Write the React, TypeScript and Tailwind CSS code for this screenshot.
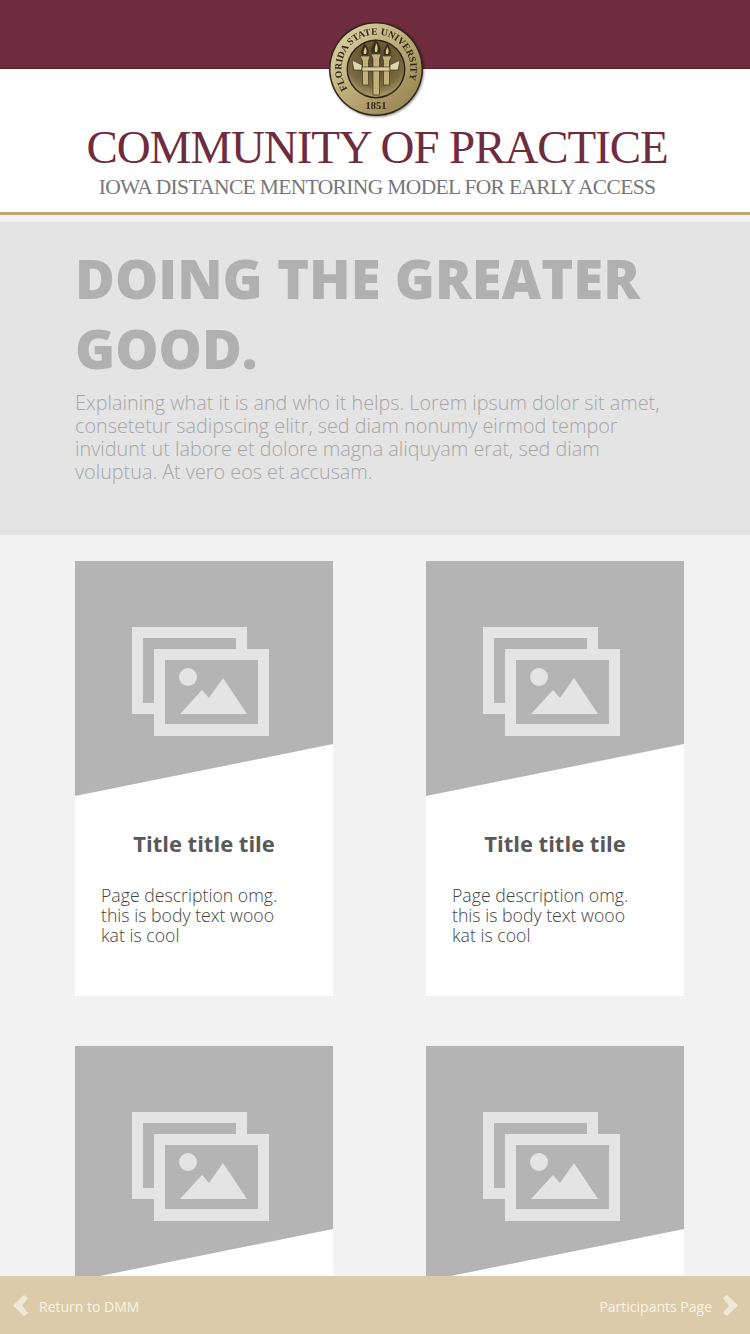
import React from "react";

const cards = [1, 2, 3, 4];

const GalleryIcon = () => (
  <svg width="137" height="109" viewBox="0 0 137 109" fill="#e4e4e4">
    <path d="M0 0H115V22H104V11H11V76H22V87H0Z" />
    <path fillRule="evenodd" d="M22 22H137V109H22ZM33 33V97H126V33Z" />
    <circle cx="56" cy="50" r="9" />
    <path d="M48 87L70 63L77 71L91 51L115 87Z" />
  </svg>
);

const Seal = () => (
  <svg width="96" height="96" viewBox="0 0 96 96" className="drop-shadow-[1px_1px_1px_rgba(0,0,0,0.45)]">
    <defs>
      <linearGradient id="ring" x1="0" y1="0" x2="1" y2="1">
        <stop offset="0" stopColor="#e0d7af" />
        <stop offset="0.5" stopColor="#bcaa76" />
        <stop offset="1" stopColor="#8f7a49" />
      </linearGradient>
      <radialGradient id="middle" cx="0.5" cy="0.3" r="0.85">
        <stop offset="0" stopColor="#55472a" />
        <stop offset="0.6" stopColor="#7b6a3e" />
        <stop offset="1" stopColor="#cbbb8a" />
      </radialGradient>
      <path id="topArc" d="M18.7 66.8A34.5 34.5 0 1 1 53 81" />
    </defs>
    <circle cx="47" cy="47" r="47" fill="#2e2617" />
    <circle cx="47" cy="47" r="45.5" fill="url(#ring)" />
    <circle cx="47" cy="47" r="29.5" fill="#2e2617" />
    <circle cx="47" cy="47" r="28" fill="url(#middle)" />
    <text fontFamily="'Liberation Serif', serif" fontSize="9.7" fontWeight="700" fill="#2e2617">
      <textPath href="#topArc">FLORIDA STATE UNIVERSITY</textPath>
    </text>
    <text x="47" y="87" textAnchor="middle" fontFamily="'Liberation Serif', serif" fontSize="10.5" fontWeight="700" fill="#2e2617">
      1851
    </text>
    <g fill="#3a2f18">
      <path d="M33 33C30 29 34 26 35 21C39 25 41 29 39 33Z" />
      <path d="M43 31C40 26 45 23 46 17C50 22 53 26 51 31Z" />
      <path d="M55 33C53 29 57 26 58 21C61 25 63 29 61 33Z" />
    </g>
    <g fill="#d8cb9c">
      <path d="M35 32C34 29 36 27 36 25C38 27 38 30 37 32Z" />
      <path d="M46 30C45 27 47 24 47 21C49 24 49 27 48 30Z" />
      <path d="M57 32C56 29 58 27 58 25C60 27 60 30 59 32Z" />
    </g>
    <g fill="#c3b07a" stroke="#2e2617" strokeWidth="0.6">
      <path d="M31 34H41L39.5 39V63H33.5V39Z" />
      <path d="M42 32H52L50.5 37V73H44V37Z" />
      <path d="M53 34H63L60.5 39V63H54.5V39Z" />
    </g>
    <path d="M23 38L33 43V48L25 48Z" fill="#e0d6ae" stroke="#2e2617" strokeWidth="0.6" />
    <path d="M33 45H61V49H33Z" fill="#d9cea3" stroke="#2e2617" strokeWidth="0.6" />
    <path d="M71 38L61 43V48L69 48Z" fill="#e0d6ae" stroke="#2e2617" strokeWidth="0.6" />
  </svg>
);

const Chevron = ({ right }: { right?: boolean }) => (
  <svg width="15" height="21" viewBox="0 0 15 21" fill="#f1e9d8" className={right ? "" : "-scale-x-100"}>
    <path d="M0 3L4 0L15 10.5L4 21L0 18L6 10.5Z" />
  </svg>
);

const Card = () => (
  <div className="bg-white h-[435px] flex flex-col">
    <div className="h-[235px] bg-[#b4b4b4] pl-[57px] pt-[66px] [clip-path:polygon(0_0,100%_0,100%_183px,0_100%)]">
      <GalleryIcon />
    </div>
    <h3 className="mt-[32px] text-center text-[22px] leading-[30px] font-bold text-[#595959]">Title title tile</h3>
    <p className="mt-[27px] pl-[26px] pr-[40px] text-[17.7px] leading-[20px] font-light text-[#444444]">
      Page description omg. this is body text wooo kat is cool
    </p>
  </div>
);

export default function App() {
  return (
    <div className="relative h-[1334px] overflow-hidden bg-[#f2f2f2] font-['Open_Sans',sans-serif]">
      {/* Header */}
      <header className="relative h-[215px] bg-white border-b-[3px] border-[#bfa876]">
        <div className="h-[69px] bg-[#6f2c3f] border-b border-[#5d2233]" />
        <div className="absolute left-[329px] top-[22px]">
          <Seal />
        </div>
        <div className="pt-[55px] pl-[4px] text-center font-['Liberation_Serif',serif]">
          <h1 className="text-[47px] leading-[46px] text-[#6f2c3f] tracking-[-1.1px]">COMMUNITY OF PRACTICE</h1>
          <p className="mt-[4px] text-[21.5px] leading-[26px] text-[#77777a] tracking-[-0.65px]">IOWA DISTANCE MENTORING MODEL FOR EARLY ACCESS</p>
        </div>
      </header>

      {/* Hero */}
      <section className="mt-[7px] h-[313px] bg-[#e4e4e4] pl-[75px] pr-[85px] pt-[21px]">
        <h2 className="text-[54.4px] leading-[70px] font-extrabold text-[#b0b0b0]">DOING THE GREATER GOOD.</h2>
        <p className="mt-[8px] text-[19.8px] leading-[23px] font-light text-[#a6a6a6]">
          Explaining what it is and who it helps. Lorem ipsum dolor sit amet, consetetur sadipscing elitr, sed diam nonumy eirmod tempor invidunt ut labore et dolore magna aliquyam erat, sed diam voluptua. At vero eos et accusam.
        </p>
      </section>

      {/* Cards */}
      <section className="grid grid-cols-[258px_258px] gap-x-[93px] gap-y-[50px] pl-[75px] pt-[26px]">
        {cards.map((id) => (
          <Card key={id} />
        ))}
      </section>

      {/* Footer */}
      <footer className="absolute bottom-0 left-0 right-0 h-[58px] bg-[#dccba9] flex justify-between items-center pl-[13px] pr-[12px] text-[14px] text-[#f8f4ea]">
        <div className="flex items-center gap-[11px]">
          <Chevron />
          <span className="pt-[2px]">Return to DMM</span>
        </div>
        <div className="flex items-center gap-[11px]">
          <span className="pt-[2px]">Participants Page</span>
          <Chevron right />
        </div>
      </footer>
    </div>
  );
}
